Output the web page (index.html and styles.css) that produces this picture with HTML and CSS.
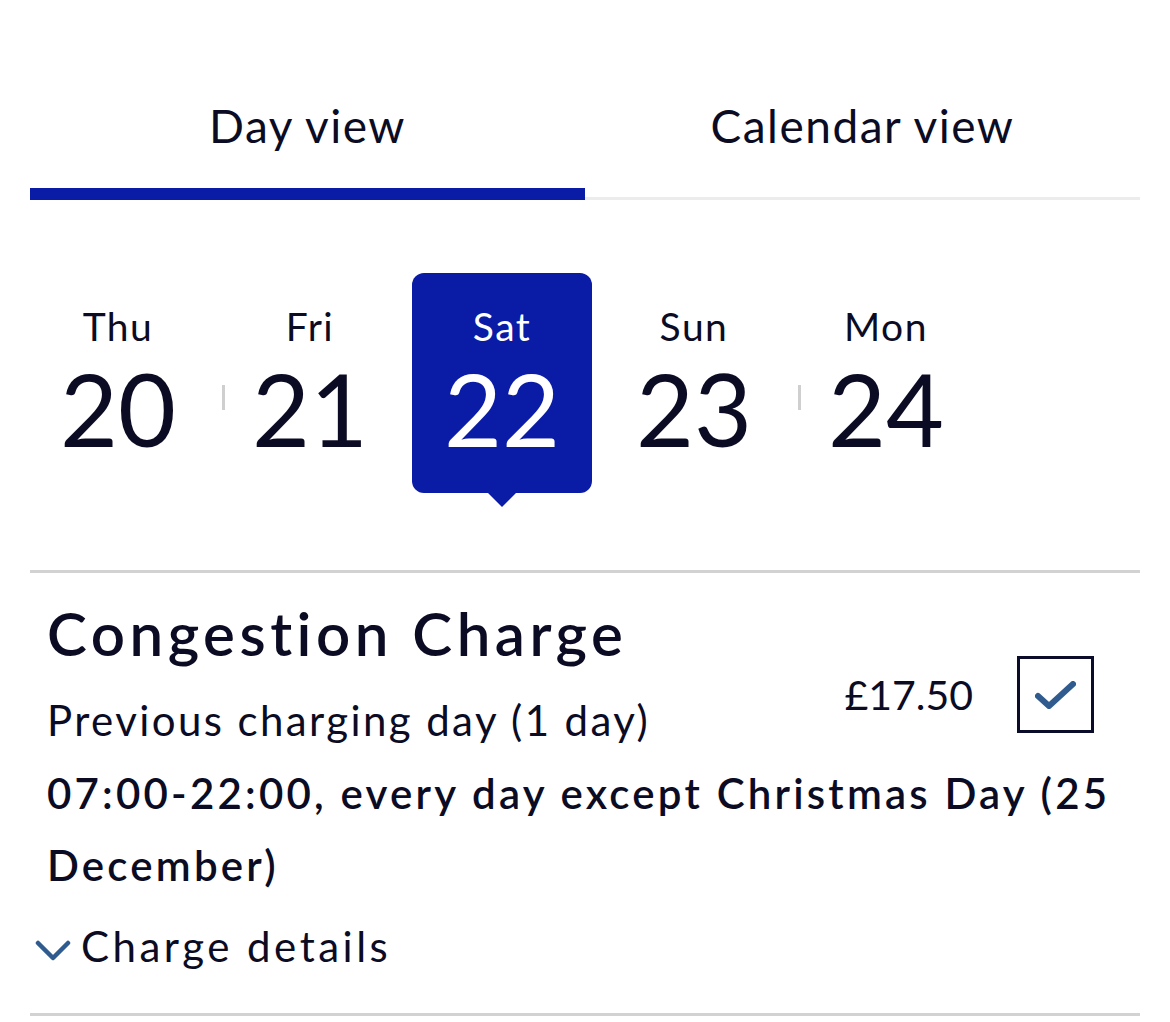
FILE: index.html
```html
<!DOCTYPE html>
<html lang="en">
<head>
<meta charset="utf-8">
<title>Day view</title>
<link rel="stylesheet" href="styles.css">
</head>
<body>
<div class="page">
  <nav class="tabs">
    <div class="tab tab-active">Day view</div>
    <div class="tab">Calendar view</div>
  </nav>

  <div class="days">
    <div class="day"><span class="day-name">Thu</span><span class="day-num">20</span></div>
    <div class="day sep"><span class="day-name">Fri</span><span class="day-num">21</span></div>
    <div class="day day-selected"><span class="day-name">Sat</span><span class="day-num">22</span></div>
    <div class="day"><span class="day-name">Sun</span><span class="day-num">23</span></div>
    <div class="day sep"><span class="day-name">Mon</span><span class="day-num">24</span></div>
  </div>

  <section class="charge">
    <div class="charge-head">
      <div class="charge-info">
        <h2 class="charge-title">Congestion Charge</h2>
        <p class="charge-sub">Previous charging day (1 day)</p>
      </div>
      <div class="charge-price">
        <span class="price">£17.50</span>
        <span class="checkbox">
          <svg width="44" height="30" viewBox="0 0 44 30" aria-hidden="true">
            <polyline points="4,16 15,26 39,4" fill="none" stroke="#2f5b8f" stroke-width="6" stroke-linecap="round" stroke-linejoin="round"/>
          </svg>
        </span>
      </div>
    </div>
    <p class="charge-times">07:00-22:00, every day except Christmas Day (25 December)</p>
    <div class="charge-details">
      <svg class="chev" width="36" height="22" viewBox="0 0 36 22" aria-hidden="true">
        <polyline points="3,4 18,19 33,4" fill="none" stroke="#2f5b8f" stroke-width="4.5" stroke-linecap="round" stroke-linejoin="round"/>
      </svg>
      <span>Charge details</span>
    </div>
  </section>
</div>
</body>
</html>
```

FILE: styles.css
```css
* { box-sizing: border-box; }

html, body {
  margin: 0;
  padding: 0;
  background: #ffffff;
}

body {
  font-family: Lato, "Open Sans", Arial, sans-serif;
  color: #0b0c24;
}

.page {
  padding: 0 30px;
}

.tabs {
  display: flex;
}

.tab {
  flex: 1 1 0;
  height: 200px;
  padding-top: 98px;
  text-align: center;
  font-size: 46px;
  line-height: 1.2;
  letter-spacing: 1.5px;
  border-bottom: 3px solid #ececec;
}

.tab-active {
  border-bottom: 12px solid #0a1ba6;
}

.days {
  display: flex;
  gap: 12px;
  margin: 73px 0 0 -2px;
}

.day {
  position: relative;
  width: 180px;
  height: 220px;
  padding-top: 30px;
  display: flex;
  flex-direction: column;
  align-items: center;
  border-radius: 12px;
}

.day.sep::before {
  content: "";
  position: absolute;
  left: 2px;
  top: 112px;
  width: 3px;
  height: 25px;
  background: #cfcfcf;
}

.day-name {
  font-size: 39px;
  line-height: 47px;
  letter-spacing: 1.5px;
}

.day-num {
  margin-top: 8px;
  font-size: 100px;
  line-height: 100px;
}

.day-selected {
  background: #0a1ba6;
  color: #ffffff;
}

.day-selected::after {
  content: "";
  position: absolute;
  left: 50%;
  bottom: -14px;
  margin-left: -14px;
  border-left: 14px solid transparent;
  border-right: 14px solid transparent;
  border-top: 14px solid #0a1ba6;
}

.charge {
  margin-top: 77px;
  border-top: 3px solid #d2d2d2;
  border-bottom: 3px solid #d2d2d2;
  padding: 0 16px 0 17px;
}

.charge-head {
  display: flex;
  justify-content: space-between;
  align-items: flex-start;
}

.charge-title {
  margin: 0;
  padding-top: 24px;
  font-size: 60px;
  line-height: 72px;
  font-weight: 600;
  letter-spacing: 4.5px;
}

.charge-sub {
  margin: 26px 0 0;
  font-size: 42px;
  line-height: 50px;
  font-weight: 400;
  letter-spacing: 2.4px;
}

.charge-price {
  display: flex;
  align-items: center;
  gap: 44px;
  margin: 83px 30px 0 0;
}

.price {
  font-size: 41px;
  line-height: 50px;
}

.checkbox {
  width: 77px;
  height: 77px;
  border: 3px solid #0b0c2a;
  display: flex;
  align-items: center;
  justify-content: center;
}

.checkbox svg {
  filter: blur(0.6px);
}

.charge-times {
  margin: 12px 0 0;
  font-size: 42px;
  line-height: 72px;
  font-weight: 600;
  letter-spacing: 3.2px;
}

.charge-details {
  display: flex;
  align-items: center;
  gap: 10px;
  margin: 18px 0 0 -12px;
  padding-bottom: 40px;
  font-size: 42px;
  line-height: 54px;
  letter-spacing: 3.5px;
}

.chev {
  flex: none;
  margin-top: 8px;
}
```
